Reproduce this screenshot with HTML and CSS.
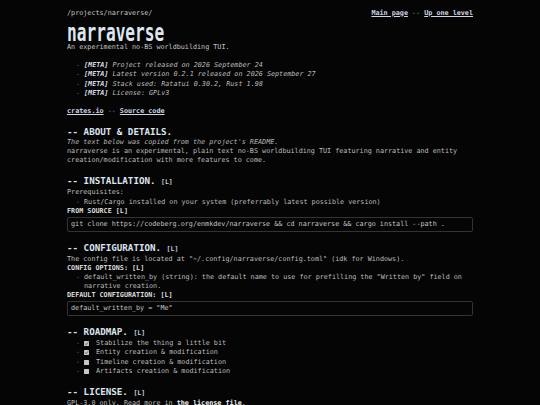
FILE: index.html
```html
<!DOCTYPE html>
<html lang="en">
<head>
<meta charset="utf-8">
<title>narraverse</title>
<link rel="stylesheet" href="styles.css">
</head>
<body>
<main class="page">
  <header class="topbar">
    <span class="path">/projects/narraverse/</span>
    <nav class="nav"><a href="#">Main page</a> -- <a href="#">Up one level</a></nav>
  </header>

  <h1 class="title"><span class="title-text">narraverse</span></h1>
  <p class="subtitle">An experimental no-BS worldbuilding TUI.</p>

  <ul class="list meta">
    <li><span class="dash">-</span><span><b>[META]</b> Project released on 2026 September 24</span></li>
    <li><span class="dash">-</span><span><b>[META]</b> Latest version 0.2.1 released on 2026 September 27</span></li>
    <li><span class="dash">-</span><span><b>[META]</b> Stack used: Ratatui 0.30.2, Rust 1.98</span></li>
    <li><span class="dash">-</span><span><b>[META]</b> License: GPLv3</span></li>
  </ul>

  <p class="links"><a href="#">crates.io</a> -- <a href="#">Source code</a></p>

  <section class="section">
    <h2 class="heading">-- ABOUT &amp; DETAILS.</h2>
    <p class="note">The text below was copied from the project's README.</p>
    <p>narraverse is an experimental, plain text no-BS worldbuilding TUI featuring narrative and entity creation/modification with more features to come.</p>
  </section>

  <section class="section">
    <h2 class="heading">-- INSTALLATION. <span class="tag">[L]</span></h2>
    <p>Prerequisites:</p>
    <ul class="list">
      <li><span class="dash">-</span><span>Rust/Cargo installed on your system (preferrably latest possible version)</span></li>
    </ul>
    <h3 class="sub">FROM SOURCE [L]</h3>
    <pre class="code">git clone https://codeberg.org/enmkdev/narraverse &amp;&amp; cd narraverse &amp;&amp; cargo install --path .</pre>
  </section>

  <section class="section">
    <h2 class="heading">-- CONFIGURATION. <span class="tag">[L]</span></h2>
    <p>The config file is located at "~/.config/narraverse/config.toml" (idk for Windows).</p>
    <h3 class="sub">CONFIG OPTIONS: [L]</h3>
    <ul class="list">
      <li><span class="dash">-</span><span>default_written_by (string): the default name to use for prefilling the "Written by" field on narrative creation.</span></li>
    </ul>
    <h3 class="sub">DEFAULT CONFIGURATION: [L]</h3>
    <pre class="code">default_written_by = "Me"</pre>
  </section>

  <section class="section">
    <h2 class="heading">-- ROADMAP. <span class="tag">[L]</span></h2>
    <ul class="list todo">
      <li><span class="dash">-</span><span class="box checked"><svg viewBox="0 0 6 6" width="6" height="6"><path d="M1.2 3.1 L2.5 4.4 L4.9 1.6" fill="none" stroke="#3a3a3a" stroke-width="0.9"/></svg></span><span>Stabilize the thing a little bit</span></li>
      <li><span class="dash">-</span><span class="box checked"><svg viewBox="0 0 6 6" width="6" height="6"><path d="M1.2 3.1 L2.5 4.4 L4.9 1.6" fill="none" stroke="#3a3a3a" stroke-width="0.9"/></svg></span><span>Entity creation &amp; modification</span></li>
      <li><span class="dash">-</span><span class="box"></span><span>Timeline creation &amp; modification</span></li>
      <li><span class="dash">-</span><span class="box"></span><span>Artifacts creation &amp; modification</span></li>
    </ul>
  </section>

  <section class="section">
    <h2 class="heading">-- LICENSE. <span class="tag">[L]</span></h2>
    <p>GPL-3.0 only. Read more in <a class="strong" href="#">the license file</a>.</p>
  </section>
</main>
</body>
</html>
```

FILE: styles.css
```css
html, body {
  margin: 0;
  padding: 0;
  background: #050505;
}

body {
  color: #bcbcbc;
  font-family: "DejaVu Sans Mono", "Liberation Mono", monospace;
  font-size: 6.75px;
  line-height: 9.1px;
}

.page {
  width: 406px;
  margin: 0 auto;
  padding-top: 8.8px;
}

p, ul, h1, h2, h3, pre {
  margin: 0;
  padding: 0;
}

a {
  color: #cdd5e4;
  font-weight: bold;
  text-decoration: underline;
  text-underline-offset: 1px;
}

.topbar {
  display: flex;
  justify-content: space-between;
  align-items: baseline;
}

.path {
  color: #c4c4c4;
}

.nav {
  color: #9a9a9a;
}

.title {
  margin-top: 5px;
  height: 20px;
  display: flex;
  align-items: center;
  color: #dfe5ee;
  font-size: 16px;
  font-weight: bold;
  line-height: 20px;
}

.title-text {
  display: inline-block;
  line-height: 9px;
  transform: scale(1.01, 1.6);
  transform-origin: left center;
}

.subtitle {
  color: #c4c4c4;
}

.list {
  list-style: none;
}

.list li {
  display: flex;
  padding-left: 9px;
}

.dash {
  flex: 0 0 8px;
  color: #6e6e6e;
}

.meta {
  margin-top: 9.4px;
  font-style: italic;
}

.meta b {
  color: #d6dce6;
}

.links {
  margin-top: 9.3px;
  color: #9a9a9a;
}

.section {
  margin-top: 10px;
}

.heading {
  color: #dce3ee;
  font-size: 9.2px;
  line-height: 12px;
  font-weight: bold;
}

.tag {
  font-size: 6.5px;
  color: #c6cedb;
}

.note {
  font-style: italic;
  color: #b4b4b4;
}

.sub {
  font-size: 6.75px;
  line-height: 9.1px;
  font-weight: bold;
  color: #dcdcdc;
}

.code {
  margin-top: 1px;
  border: 1px solid #333;
  border-radius: 2px;
  padding: 2px 3px;
  font-family: inherit;
  font-size: 6.75px;
  line-height: 9.1px;
  color: #c4c4c4;
  white-space: pre;
}

.todo .box {
  flex: 0 0 5px;
  width: 5px;
  height: 5px;
  margin: 2px 7px 0 0;
  background: #c6c6c6;
  border-radius: 0.5px;
  display: flex;
  align-items: center;
  justify-content: center;
  overflow: hidden;
}

.todo .box svg {
  display: block;
  width: 5px;
  height: 5px;
}

a.strong {
  color: #f0f0f0;
  text-decoration: none;
}
```
